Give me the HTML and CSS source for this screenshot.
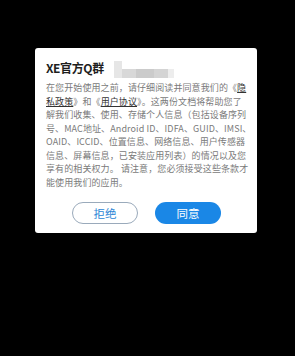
FILE: index.html
```html
<!DOCTYPE html>
<html lang="zh-CN">
<head>
    <meta charset="UTF-8">
    <meta name="viewport" content="width=device-width, initial-scale=1.0">
    <title>隐私政策</title>
    <link rel="stylesheet" href="styles.css">
</head>
<body>
    <div class="dialog">
        <div class="dialog-title">
            <span>XE官方Q群</span>
            <span class="blur">
                <i class="b1"></i><i class="b2"></i><i class="b3"></i><i class="b4"></i><i class="b5"></i>
            </span>
        </div>

        <p class="dialog-text">
            在您开始使用之前，请仔细阅读并同意我们的《<a>隐</a><br>
            <a>私政策</a>》和《<a>用户协议</a>》。这两份文档将帮助您了<br>
            解我们收集、使用、存储个人信息（包括设备序列<br>
            号、MAC地址、Android ID、IDFA、GUID、IMSI、<br>
            OAID、ICCID、位置信息、网络信息、用户传感器<br>
            信息、屏幕信息，已安装应用列表）的情况以及您<br>
            享有的相关权力。 请注意，您必须接受这些条款才<br>
            能使用我们的应用。
        </p>

        <div class="dialog-actions">
            <button class="btn btn-cancel">拒绝</button>
            <button class="btn btn-ok">同意</button>
        </div>
    </div>
</body>
</html>
```

FILE: styles.css
```css
* {
    margin: 0;
    padding: 0;
    box-sizing: border-box;
}

body {
    background: #000;
    font-family: "Noto Sans CJK SC", "Noto Sans", sans-serif;
    height: 100vh;
    overflow: hidden;
}

.dialog {
    width: 222px;
    margin: 48px 0 0 35px;
    background: #fff;
    border-radius: 3px;
    padding: 11px 10px 9px 11px;
}

.dialog-title {
    display: flex;
    align-items: center;
    height: 16px;
    font-size: 12px;
    font-weight: bold;
    color: #1e1e1e;
    letter-spacing: -0.4px;
}

.blur {
    display: flex;
    align-items: flex-end;
    height: 18px;
    margin-left: 10px;
    margin-top: 4px;
}

.blur i {
    display: block;
    height: 9px;
}

.b1 { width: 8px; background: #e6e6e6; height: 17px !important; }
.b2 { width: 14px; background: #d8d8d8; }
.b3 { width: 18px; background: #cbcbcb; }
.b4 { width: 14px; background: #d4d4d4; }
.b5 { width: 6px; background: #ededed; }

.dialog-text {
    margin-top: 6px;
    font-size: 9px;
    line-height: 13.5px;
    color: #7a7a7a;
    white-space: nowrap;
    letter-spacing: 0.1px;
}

.dialog-text a {
    color: #333;
    text-decoration: underline;
}

.dialog-actions {
    display: flex;
    justify-content: center;
    gap: 17px;
    margin-top: 13px;
}

.btn {
    width: 66px;
    height: 22px;
    border-radius: 11px;
    font-family: "Noto Sans CJK SC", sans-serif;
    font-size: 11.5px;
    cursor: pointer;
}

.btn-cancel {
    background: #fff;
    color: #2d86d6;
    border: 1px solid #9aaabb;
}

.btn-ok {
    background: #1a87e6;
    color: #fff;
    border: none;
}
```
